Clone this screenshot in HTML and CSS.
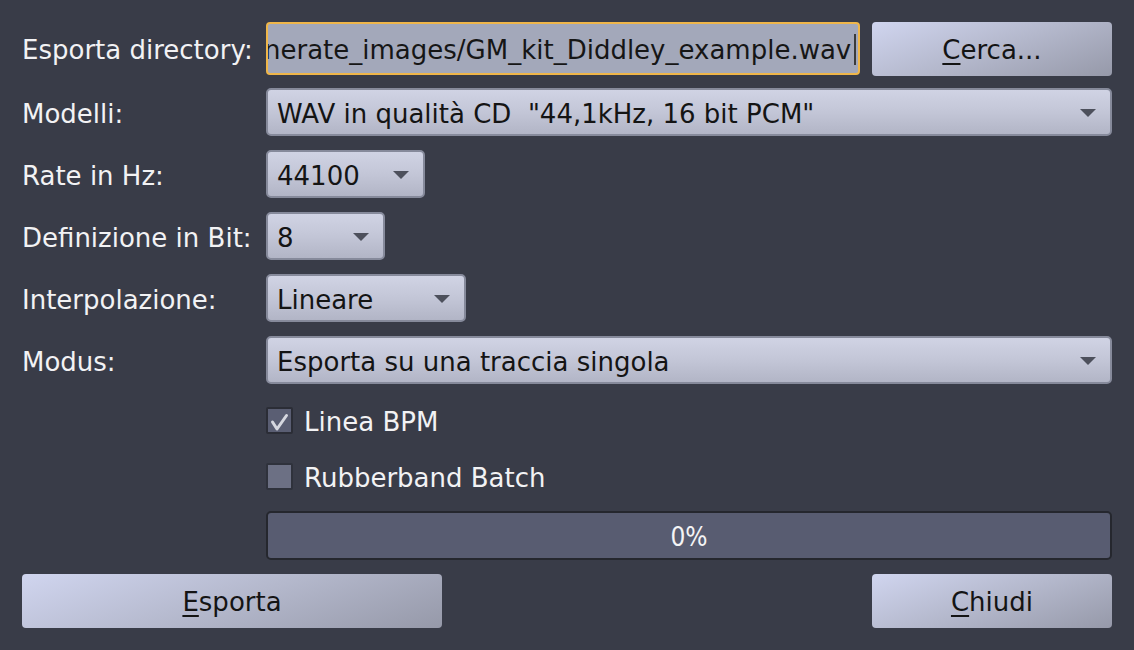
FILE: index.html
```html
<!DOCTYPE html>
<html lang="it">
<head>
<meta charset="utf-8">
<title>Esporta</title>
<link rel="stylesheet" href="styles.css">
</head>
<body>
<div class="dialog">
  <div class="row row-dir">
    <div class="label">Esporta directory:</div>
    <div class="field">
      <div class="line-edit"><span class="le-text">nerate_images/GM_kit_Diddley_example.wav</span><span class="cursor"></span></div>
      <button class="btn btn-cerca"><u>C</u>erca...</button>
    </div>
  </div>
  <div class="row">
    <div class="label">Modelli:</div>
    <div class="field"><div class="combo combo-full"><span>WAV in qualità CD&nbsp; "44,1kHz, 16 bit PCM"</span><i class="arrow"></i></div></div>
  </div>
  <div class="row">
    <div class="label">Rate in Hz:</div>
    <div class="field"><div class="combo combo-rate"><span>44100</span><i class="arrow"></i></div></div>
  </div>
  <div class="row">
    <div class="label">Definizione in Bit:</div>
    <div class="field"><div class="combo combo-bit"><span>8</span><i class="arrow"></i></div></div>
  </div>
  <div class="row">
    <div class="label">Interpolazione:</div>
    <div class="field"><div class="combo combo-interp"><span>Lineare</span><i class="arrow"></i></div></div>
  </div>
  <div class="row">
    <div class="label">Modus:</div>
    <div class="field"><div class="combo combo-full"><span>Esporta su una traccia singola</span><i class="arrow"></i></div></div>
  </div>
  <div class="row row-cb1">
    <div class="label"></div>
    <div class="field"><span class="check checked"><svg viewBox="0 0 27 27" width="27" height="27"><path d="M6.5 15 L11 22 L20.5 8.5" fill="none" stroke="#d6d8e0" stroke-width="3" stroke-linecap="round" stroke-linejoin="round"/></svg></span><span class="cb-text">Linea BPM</span></div>
  </div>
  <div class="row row-cb2">
    <div class="label"></div>
    <div class="field"><span class="check"></span><span class="cb-text">Rubberband Batch</span></div>
  </div>
  <div class="row row-progress">
    <div class="label"></div>
    <div class="field"><div class="progress">0%</div></div>
  </div>
  <div class="row-buttons">
    <button class="btn btn-esporta"><u>E</u>sporta</button>
    <button class="btn btn-chiudi"><u>C</u>hiudi</button>
  </div>
</div>
</body>
</html>
```

FILE: styles.css
```css
html, body {
  margin: 0;
  padding: 0;
  background: #393c48;
  width: 1134px;
  height: 650px;
  overflow: hidden;
}
body {
  font-family: "DejaVu Sans", sans-serif;
  font-size: 26px;
  color: #f2f2f4;
}
.dialog {
  padding: 22px 22px 0 22px;
  display: flex;
  flex-direction: column;
  gap: 14px;
}
.row {
  display: flex;
  align-items: center;
  height: 48px;
}
.row-dir { height: 53px; margin-bottom: -1px; }
.row-cb1 { height: 44px; }
.row-cb2 { height: 41px; }
.row-progress { height: 49px; }
.label {
  width: 244px;
  flex: none;
  white-space: nowrap;
  padding-top: 3px;
}
.field {
  flex: 1;
  display: flex;
  align-items: center;
  height: 100%;
}
.line-edit {
  width: 594px;
  height: 53px;
  box-sizing: border-box;
  border: 2px solid #efb64a;
  border-radius: 4px;
  background: #a3a8ba;
  color: #161616;
  display: flex;
  align-items: center;
  overflow: hidden;
  white-space: nowrap;
  padding-top: 2px;
}
.le-text { margin-left: -4px; }
.cursor {
  display: inline-block;
  width: 2px;
  height: 31px;
  background: #3a3a3a;
  margin-left: 3px;
  flex: none;
}
.btn {
  font-family: inherit;
  font-size: 26px;
  color: #141414;
  border: none;
  border-radius: 4px;
  background: linear-gradient(160deg, #d0d5ef 0%, #b4b8cc 50%, #9699a9 100%);
  padding: 2px 0 0 0;
  cursor: default;
}
.btn u { text-decoration-thickness: 2px; text-underline-offset: 4px; }
.btn-cerca {
  width: 240px;
  height: 54px;
  margin-left: 12px;
}
.combo {
  height: 48px;
  box-sizing: border-box;
  border: 2px solid #868a9b;
  border-radius: 5px;
  background: linear-gradient(180deg, #d0d3e4 0%, #c3c6d7 50%, #b2b5c6 100%);
  color: #141414;
  display: flex;
  align-items: center;
  justify-content: space-between;
  padding: 0 14px 0 9px;
  white-space: nowrap;
}
.combo span { padding-top: 3px; }
.combo-full { width: 846px; }
.combo-rate { width: 159px; }
.combo-bit { width: 119px; }
.combo-interp { width: 200px; }
.arrow {
  width: 0;
  height: 0;
  border-left: 8px solid transparent;
  border-right: 8px solid transparent;
  border-top: 8px solid #4d505c;
  margin-top: 1px;
}
.check {
  width: 27px;
  height: 27px;
  box-sizing: border-box;
  border: 2px solid #2f323c;
  border-radius: 2px;
  background: #6c7084;
  display: inline-block;
  flex: none;
}
.check.checked { background: #5a5e73; border-color: #2b2d36; }
.check svg { display: block; margin: -2px; }
.cb-text { margin-left: 11px; padding-top: 3px; }
.progress {
  width: 846px;
  height: 49px;
  box-sizing: border-box;
  border: 2px solid #25272e;
  border-radius: 5px;
  background: #585c71;
  color: #f4f4f6;
  display: flex;
  align-items: center;
  justify-content: center;
  padding-top: 2px;
  font-family: "DejaVu Sans Condensed", "DejaVu Sans", sans-serif;
  font-stretch: condensed;
}
.row-buttons {
  display: flex;
  justify-content: space-between;
  margin-top: 0;
}
.btn-esporta { width: 420px; height: 54px; }
.btn-chiudi { width: 240px; height: 54px; }
```
